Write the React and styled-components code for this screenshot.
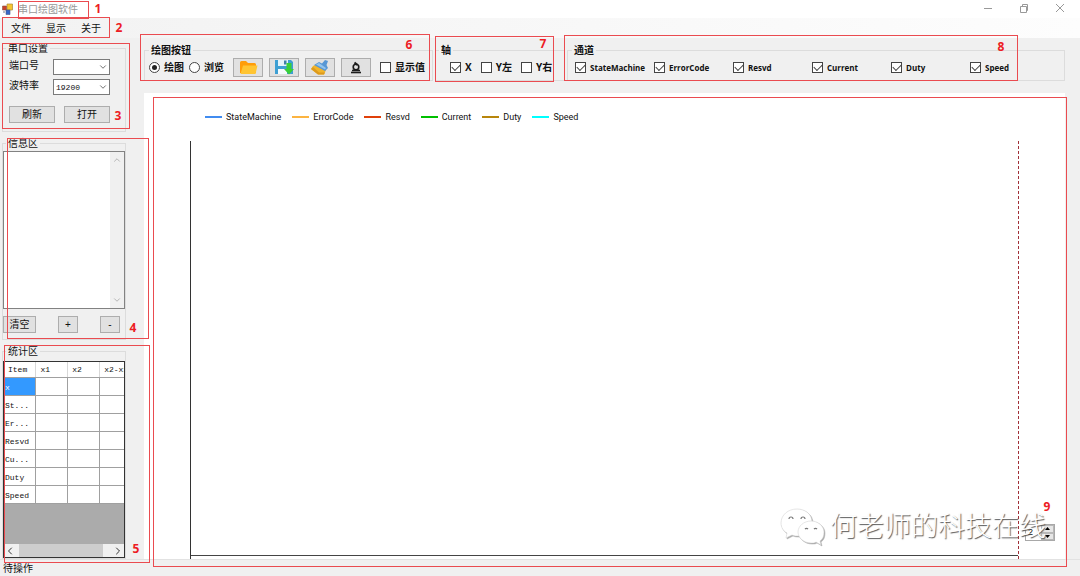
import React, { useState } from "react";
import styled, { createGlobalStyle } from "styled-components";
import { ChevronDown, ChevronLeft, ChevronRight, ChevronUp } from "lucide-react";

const GlobalStyle = createGlobalStyle`
  * {
    box-sizing: border-box;
  }
  body {
    margin: 0;
    background: #f0f0f0;
    color: #111;
    font-family: "Liberation Sans", "Noto Sans CJK SC", sans-serif;
    font-size: 10px;
    line-height: 13px;
  }
  button, input, select, textarea {
    font: inherit;
    color: inherit;
    margin: 0;
  }
`;

const Window = styled.div`
  display: flex;
  flex-direction: column;
  min-height: 100vh;
  overflow: hidden;
`;

const TitleBar = styled.header`
  display: flex;
  align-items: center;
  gap: 5px;
  height: 18px;
  padding: 0 2px;
  background: #fff;
`;

const Caption = styled.h1`
  position: relative;
  margin: 0;
  padding-right: 11px;
  color: #999;
  font-size: 10px;
  font-weight: 400;
`;

const WindowButtons = styled.div`
  display: flex;
  margin-left: auto;
`;

const WindowButton = styled.button`
  display: flex;
  align-items: center;
  justify-content: center;
  width: 36px;
  height: 16px;
  padding: 0;
  border: 0;
  background: none;
`;

const MenuBar = styled.nav`
  display: flex;
  height: 20px;
  padding-left: 2px;
  background: linear-gradient(90deg, #f2f2f2, #fdfdfd);
`;

const MenuList = styled.div`
  position: relative;
  display: flex;
  align-items: center;
  gap: 15px;
  padding: 0 9px;
`;

const MenuLink = styled.a`
  color: #111;
  text-decoration: none;
`;

const Body = styled.div`
  display: flex;
  flex: 1;
`;

const Sidebar = styled.aside`
  display: flex;
  flex-direction: column;
  gap: 5px;
  width: 144px;
  padding: 4px 18px 0 2px;
`;

const Main = styled.main`
  display: flex;
  flex: 1;
  flex-direction: column;
  gap: 12px;
  min-width: 0;
  padding: 6px 15px 0 0;
`;

const Toolbar = styled.div`
  display: flex;
  gap: 2px;
`;

const Region = styled.section`
  position: relative;
  display: flex;
  flex-direction: column;
  flex: ${(props) => props.$flex || "none"};
  width: ${(props) => props.$width || "auto"};
`;

const Group = styled.fieldset`
  display: flex;
  flex: 1;
  flex-direction: column;
  min-width: 0;
  margin: 0;
  padding: ${(props) => props.$padding || "0"};
  border: 1px solid #dcdcdc;
`;

const Legend = styled.legend`
  margin-left: ${(props) => props.$indent || "3px"};
  padding: 0 2px;
  font-weight: ${(props) => (props.$bold ? 700 : 400)};
`;

const Mark = styled.div`
  position: absolute;
  inset: ${(props) => props.$inset};
  z-index: 2;
  border: 1px solid #ea4b50;
  pointer-events: none;
`;

const MarkNumber = styled.span`
  position: absolute;
  top: ${(props) => props.$top || "auto"};
  right: ${(props) => props.$right};
  bottom: ${(props) => props.$bottom || "auto"};
  width: 8px;
  color: #ed1c24;
  font-family: "Open Sans", sans-serif;
  font-size: 12px;
  font-weight: 700;
  line-height: 14px;
  text-align: center;
`;

const Field = styled.div`
  display: flex;
  align-items: flex-start;
  justify-content: space-between;
  height: 20px;
`;

const Picker = styled.div`
  position: relative;
  width: 57px;
  height: 16px;

  svg {
    position: absolute;
    top: 3px;
    right: 2px;
    pointer-events: none;
  }
`;

const Select = styled.select`
  appearance: none;
  display: block;
  width: 100%;
  height: 100%;
  padding: 0 2px;
  border: 1px solid #7a7a7a;
  border-radius: 0;
  background: #fff;
  font-family: "Liberation Mono", monospace;
  font-size: 8px;
`;

const ButtonRow = styled.div`
  display: flex;
  justify-content: space-between;
  margin-top: 7px;
  padding-right: ${(props) => props.$end || "0"};
`;

const Button = styled.button`
  display: flex;
  align-items: center;
  justify-content: center;
  width: ${(props) => props.$width};
  height: ${(props) => props.$height || "17px"};
  padding: 0;
  border: 1px solid #adadad;
  background: #e1e1e1;
`;

const Log = styled.div`
  display: flex;
  height: 158px;
  margin-top: 1px;
  border: 1px solid #828282;
  background: #fff;
`;

const LogText = styled.textarea`
  flex: 1;
  min-width: 0;
  border: 0;
  outline: 0;
  resize: none;
`;

const VerticalScroll = styled.div`
  display: flex;
  flex-direction: column;
  align-items: center;
  justify-content: space-between;
  width: 14px;
  padding: 3px 0;
  background: #f0f0f0;
`;

const HorizontalScroll = styled.div`
  display: flex;
  align-items: center;
  height: 13px;
  background: #f0f0f0;
`;

const Thumb = styled.div`
  flex: 1;
  height: 13px;
  margin: 0 9px 0 3px;
  background: #cdcdcd;
`;

const GridBox = styled.div`
  display: flex;
  flex: 1;
  flex-direction: column;
  justify-content: space-between;
  margin-top: 3px;
  overflow: hidden;
  border: 1px solid #333;
  background: #ababab;
`;

const Table = styled.table`
  width: 128px;
  border-collapse: collapse;
  table-layout: fixed;
  background: #fff;
  font-family: "Liberation Mono", monospace;
  font-size: 8px;
  line-height: 12px;
`;

const HeadCell = styled.th`
  height: 15px;
  padding: 2px 4px 0;
  border-right: 1px solid #d8d8d8;
  border-bottom: 1px solid #a0a0a0;
  font-weight: 400;
  text-align: left;
  white-space: nowrap;
`;

const Cell = styled.td`
  height: 18px;
  padding: 3px 1px 0;
  border-right: 1px solid #a0a0a0;
  border-bottom: 1px solid #a0a0a0;
  background: ${(props) => (props.$selected ? "#3399ff" : "#fff")};
  color: ${(props) => (props.$selected ? "#fff" : "#111")};
  white-space: nowrap;
`;

const Controls = styled.div`
  display: flex;
  align-items: center;
  gap: ${(props) => props.$gap || "9px"};
  height: 20px;
`;

const AxisControls = styled(Controls)`
  padding-left: 11px;
`;

const ChannelControls = styled(Controls)`
  gap: 0;
`;

const Choice = styled.label`
  display: flex;
  align-items: center;
  gap: 4px;
  min-width: ${(props) => props.$width || "auto"};
  font-size: ${(props) => props.$size || "10px"};
  font-weight: 700;
  font-family: "Open Sans", "Noto Sans CJK SC", sans-serif;
  white-space: nowrap;
`;

const Checkbox = styled.input`
  appearance: none;
  display: grid;
  place-items: center;
  flex: none;
  width: 11px;
  height: 11px;
  border: 1px solid #444;
  background: #fff;

  &:checked::after {
    content: "";
    width: 7px;
    height: 4px;
    margin-bottom: 2px;
    border: solid #444;
    border-width: 0 0 1px 1px;
    transform: rotate(-45deg);
  }
`;

const Radio = styled(Checkbox)`
  border-radius: 50%;

  &:checked::after {
    width: 5px;
    height: 5px;
    margin: 0;
    border: 0;
    border-radius: 50%;
    background: #222;
    transform: none;
  }
`;

const Chart = styled.div`
  display: flex;
  flex: 1;
  flex-direction: column;
  gap: 18px;
  padding-top: 18px;
  background: #fff;
`;

const Series = styled.ul`
  display: flex;
  gap: 11px;
  margin: 0;
  padding: 0 0 0 61px;
  list-style: none;
  font-family: Roboto, sans-serif;
  font-size: 9px;
  line-height: 12px;
`;

const SeriesItem = styled.li`
  display: flex;
  align-items: center;
  gap: 4px;

  &::before {
    content: "";
    width: 17px;
    height: 2px;
    background: ${(props) => props.$color};
  }
`;

const Plot = styled.div`
  display: flex;
  flex: 1;
  margin: 0 46px;
  padding-bottom: 3px;
  border-left: 1px solid #333;
  border-right: 1px dashed #a03038;
`;

const PlotArea = styled.div`
  flex: 1;
  border-bottom: 1px solid #444;
`;

const Spinner = styled.div`
  position: absolute;
  right: 10px;
  bottom: 18px;
  display: flex;
  width: 30px;
  height: 17px;
  border: 1px solid #a8a8a8;
  background: #fff;
`;

const SpinnerInput = styled.input`
  flex: 1;
  min-width: 0;
  padding: 0 2px;
  border: 0;
  font-size: 9px;
`;

const SpinnerButtons = styled.div`
  display: flex;
  flex-direction: column;
  width: 13px;
`;

const SpinnerButton = styled.button`
  display: flex;
  flex: 1;
  align-items: center;
  justify-content: center;
  padding: 0;
  border: 1px solid #b8b8b8;
  background: #e6e6e6;
`;

const Watermark = styled.div`
  position: absolute;
  right: 19px;
  bottom: 13px;
  display: flex;
  align-items: center;
  gap: 4px;
  color: #fff;
  font-size: 27px;
  font-weight: 300;
  line-height: 36px;
  text-shadow: 1px 1px 1px #555;
  white-space: nowrap;
  pointer-events: none;

  svg {
    filter: drop-shadow(1px 1px 0 #aaa);
  }
`;

const StatusBar = styled.footer`
  height: 17px;
  padding: 2px 3px;
  border-top: 1px solid #e2e2e2;
`;

const channels = [
  { name: "StateMachine", color: "#418cf0" },
  { name: "ErrorCode", color: "#fcb441" },
  { name: "Resvd", color: "#e0400a" },
  { name: "Current", color: "#00c000" },
  { name: "Duty", color: "#b8860b" },
  { name: "Speed", color: "#00ffff" },
];

const stats = ["x", "St...", "Er...", "Resvd", "Cu...", "Duty", "Speed"];

const AppIcon = () => (
  <svg width="11" height="12" viewBox="0 0 11 12">
    <path d="M5 1h5.500v6H5z" fill="#f7c62f" stroke="#a98b3a" strokeWidth=".7" />
    <path d="M.5 3h4v4h-4z" fill="#c8402c" stroke="#8c5040" strokeWidth=".6" />
    <path d="M4 7h4v4.500H4z" fill="#3567c9" stroke="#4a5c88" strokeWidth=".6" />
    <path d="M1 8h2v2H1z" fill="#b9bcc2" />
  </svg>
);

const FolderIcon = () => (
  <svg width="19" height="15" viewBox="0 0 19 15">
    <path d="M1 2.500Q1 1 2.500 1H7l2 2h6.500Q17 3 17 4.500V13H1z" fill="#ff9d0a" />
    <path d="M4 5.500h14.500L16.500 14H1.500z" fill="#ffc533" />
  </svg>
);

const SaveIcon = () => (
  <svg width="20" height="16" viewBox="0 0 20 16">
    <path d="M1 1h16l2 2v12H1z" fill="#3d9fd3" />
    <path d="M4 1h10v6H4z" fill="#e4f3fa" />
    <path d="M10 1.500h2.500v4H10z" fill="#3d7fa8" />
    <path d="M4 10h9v5H4z" fill="#f5fafc" />
    <path d="M12.500 4h5v6h2.500l-5 5.500L10 10h2.500z" fill="#38cf38" />
  </svg>
);

const BrushIcon = () => (
  <svg width="20" height="17" viewBox="0 0 20 17">
    <path d="M3 7l4-2 9 6-2 4.500H8L1 10z" fill="#f1b52c" />
    <path d="M1 10l7 5.500h6l1-2H9L3 8z" fill="#dd9a1c" />
    <path d="M4 6l5-3 3 1.500L15 1l3 1-1.500 4 1.500 3-3 3z" fill="#5797d5" />
    <path d="M6 5.500l3-1.500 7 5-1 1.500z" fill="#93c4ed" />
  </svg>
);

const ProbeIcon = () => (
  <svg width="14" height="13" viewBox="0 0 14 13" fill="none" stroke="#1c1c1c">
    <circle cx="7" cy="6" r="2.800" strokeWidth="1.600" />
    <path d="M5.500 1.500l3 2.500" strokeWidth="2" />
    <path d="M3 9.500h8" strokeWidth="1.600" />
    <path d="M2 11.500h10" strokeWidth="1.600" />
  </svg>
);

const WeChatIcon = () => (
  <svg width="46" height="38" viewBox="0 0 46 38" fill="#fff" stroke="#ccc" strokeWidth=".5">
    <path d="M17 1C8 1 1 7 1 15c0 4 2 8 6 10l-1 5 6-3c2 1 4 1 7 1 8 0 13-6 13-14S25 1 17 1z" />
    <path d="M31 13c-7 0-13 5-13 11s6 11 13 11c2 0 4 0 5-1l5 3-1-4c3-2 4-5 4-9 0-6-6-11-13-11z" />
    <path
      d="M9 11a2 2 0 0 1 4 0M21 11a2 2 0 0 1 4 0M25 21a2 2 0 0 1 3 0M34 21a2 2 0 0 1 3 0"
      fill="none"
      stroke="#777"
      strokeWidth="1.200"
    />
  </svg>
);

const App = () => {
  const [mode, setMode] = useState("draw");
  const [log, setLog] = useState("");

  return (
    <Window>
      <GlobalStyle />
      <TitleBar>
        <AppIcon />
        <Caption>
          串口绘图软件
          <Mark $inset="-2px 0 -3px 0">
            <MarkNumber $top="0" $right="-14px">1</MarkNumber>
          </Mark>
        </Caption>
        <WindowButtons>
          <WindowButton aria-label="最小化">
            <svg width="10" height="10" viewBox="0 0 10 10" stroke="#999">
              <path d="M1 4.500h8" />
            </svg>
          </WindowButton>
          <WindowButton aria-label="还原">
            <svg width="10" height="10" viewBox="0 0 10 10" fill="none" stroke="#999">
              <path d="M1.500 2.500h6v6h-6zM3.500 2.500v-2h5v6h-1" />
            </svg>
          </WindowButton>
          <WindowButton aria-label="关闭">
            <svg width="10" height="10" viewBox="0 0 10 10" stroke="#999">
              <path d="M1 0l8 8M9 0L1 8" />
            </svg>
          </WindowButton>
        </WindowButtons>
      </TitleBar>
      <MenuBar>
        <MenuList>
          <MenuLink href="#file">文件</MenuLink>
          <MenuLink href="#view">显示</MenuLink>
          <MenuLink href="#about">关于</MenuLink>
          <Mark $inset="-1px 0 0 0">
            <MarkNumber $top="3px" $right="-14px">2</MarkNumber>
          </Mark>
        </MenuList>
      </MenuBar>

      <Body>
        <Sidebar>
          <Region>
            <Group $padding="4px 15px 8px 6px">
              <Legend $indent="-3px">串口设置</Legend>
              <Field>
                <label htmlFor="port">端口号</label>
                <Picker>
                  <Select id="port">
                    <option></option>
                  </Select>
                  <ChevronDown size={10} color="#555" />
                </Picker>
              </Field>
              <Field>
                <label htmlFor="baud">波特率</label>
                <Picker>
                  <Select id="baud">
                    <option>19200</option>
                  </Select>
                  <ChevronDown size={10} color="#555" />
                </Picker>
              </Field>
              <ButtonRow>
                <Button $width="46px">刷新</Button>
                <Button $width="46px">打开</Button>
              </ButtonRow>
            </Group>
            <Mark $inset="1px -4px 3px 0">
              <MarkNumber $bottom="5px" $right="7px">3</MarkNumber>
            </Mark>
          </Region>

          <Region>
            <Group $padding="0 0 6px">
              <Legend>信息区</Legend>
              <Log>
                <LogText aria-label="信息区" value={log} onChange={(e) => setLog(e.target.value)} />
                <VerticalScroll>
                  <ChevronUp size={10} color="#aaa" />
                  <ChevronDown size={10} color="#aaa" />
                </VerticalScroll>
              </Log>
              <ButtonRow $end="5px">
                <Button $width="33px" onClick={() => setLog("")}>清空</Button>
                <Button $width="20px">+</Button>
                <Button $width="20px">-</Button>
              </ButtonRow>
            </Group>
            <Mark $inset="1px -23px 1px 5px">
              <MarkNumber $bottom="3px" $right="11px">4</MarkNumber>
            </Mark>
          </Region>

          <Region $flex="1">
            <Group>
              <Legend>统计区</Legend>
              <GridBox>
                <Table>
                  <thead>
                    <tr>
                      <HeadCell>Item</HeadCell>
                      <HeadCell>x1</HeadCell>
                      <HeadCell>x2</HeadCell>
                      <HeadCell>x2-x1</HeadCell>
                    </tr>
                  </thead>
                  <tbody>
                    {stats.map((item, index) => (
                      <tr key={item}>
                        <Cell $selected={index === 0}>{item}</Cell>
                        <Cell />
                        <Cell />
                        <Cell />
                      </tr>
                    ))}
                  </tbody>
                </Table>
                <HorizontalScroll>
                  <ChevronLeft size={12} color="#333" />
                  <Thumb />
                  <ChevronRight size={12} color="#333" />
                </HorizontalScroll>
              </GridBox>
            </Group>
            <Mark $inset="0 -24px -4px 2px">
              <MarkNumber $bottom="6px" $right="9px">5</MarkNumber>
            </Mark>
          </Region>
        </Sidebar>

        <Main>
          <Toolbar>
            <Region $width="289px">
              <Group $padding="0 4px 3px">
                <Legend $bold $indent="0">绘图按钮</Legend>
                <Controls>
                  <Controls $gap="5px">
                    <Choice>
                      <Radio type="radio" name="mode" checked={mode === "draw"} onChange={() => setMode("draw")} />
                      绘图
                    </Choice>
                    <Choice>
                      <Radio type="radio" name="mode" checked={mode === "browse"} onChange={() => setMode("browse")} />
                      浏览
                    </Choice>
                  </Controls>
                  <Controls $gap="6px">
                    <Button $width="30px" $height="19px" aria-label="打开文件"><FolderIcon /></Button>
                    <Button $width="30px" $height="19px" aria-label="保存"><SaveIcon /></Button>
                    <Button $width="30px" $height="19px" aria-label="清除"><BrushIcon /></Button>
                    <Button $width="30px" $height="19px" aria-label="复位"><ProbeIcon /></Button>
                  </Controls>
                  <Choice>
                    <Checkbox type="checkbox" />
                    显示值
                  </Choice>
                </Controls>
              </Group>
              <Mark $inset="-10px 3px 0 -4px">
                <MarkNumber $top="3px" $right="16px">6</MarkNumber>
              </Mark>
            </Region>

            <Region $width="130px">
              <Group $padding="0 3px 3px">
                <Legend $bold $indent="0">轴</Legend>
                <AxisControls>
                  <Choice><Checkbox type="checkbox" defaultChecked />X</Choice>
                  <Choice><Checkbox type="checkbox" />Y左</Choice>
                  <Choice><Checkbox type="checkbox" />Y右</Choice>
                </AxisControls>
              </Group>
              <Mark $inset="-8px 11px -1px 0">
                <MarkNumber $top="0" $right="6px">7</MarkNumber>
              </Mark>
            </Region>

            <Region $flex="1">
              <Group $padding="0 7px 3px">
                <Legend $bold $indent="-3px">通道</Legend>
                <ChannelControls>
                  {channels.map((channel) => (
                    <Choice key={channel.name} $width="79px" $size="8px">
                      <Checkbox type="checkbox" defaultChecked />
                      {channel.name}
                    </Choice>
                  ))}
                </ChannelControls>
              </Group>
              <Mark $inset="-9px 47px 0 -3px">
                <MarkNumber $top="4px" $right="12px">8</MarkNumber>
              </Mark>
            </Region>
          </Toolbar>

          <Region $flex="1">
            <Chart>
              <Series>
                {channels.map((channel) => (
                  <SeriesItem key={channel.name} $color={channel.color}>{channel.name}</SeriesItem>
                ))}
              </Series>
              <Plot>
                <PlotArea />
              </Plot>
            </Chart>
            <Spinner>
              <SpinnerInput aria-label="数值" defaultValue="2" />
              <SpinnerButtons>
                <SpinnerButton aria-label="增加">
                  <svg width="5" height="3" viewBox="0 0 5 3"><path d="M0 3l2.500-3L5 3z" /></svg>
                </SpinnerButton>
                <SpinnerButton aria-label="减少">
                  <svg width="5" height="3" viewBox="0 0 5 3"><path d="M0 0l2.500 3L5 0z" /></svg>
                </SpinnerButton>
              </SpinnerButtons>
            </Spinner>
            <Watermark>
              <WeChatIcon />
              何老师的科技在线
            </Watermark>
            <Mark $inset="4px -2px -8px 9px">
              <MarkNumber $bottom="52px" $right="15px">9</MarkNumber>
            </Mark>
          </Region>
        </Main>
      </Body>

      <StatusBar>待操作</StatusBar>
    </Window>
  );
};

export default App;
